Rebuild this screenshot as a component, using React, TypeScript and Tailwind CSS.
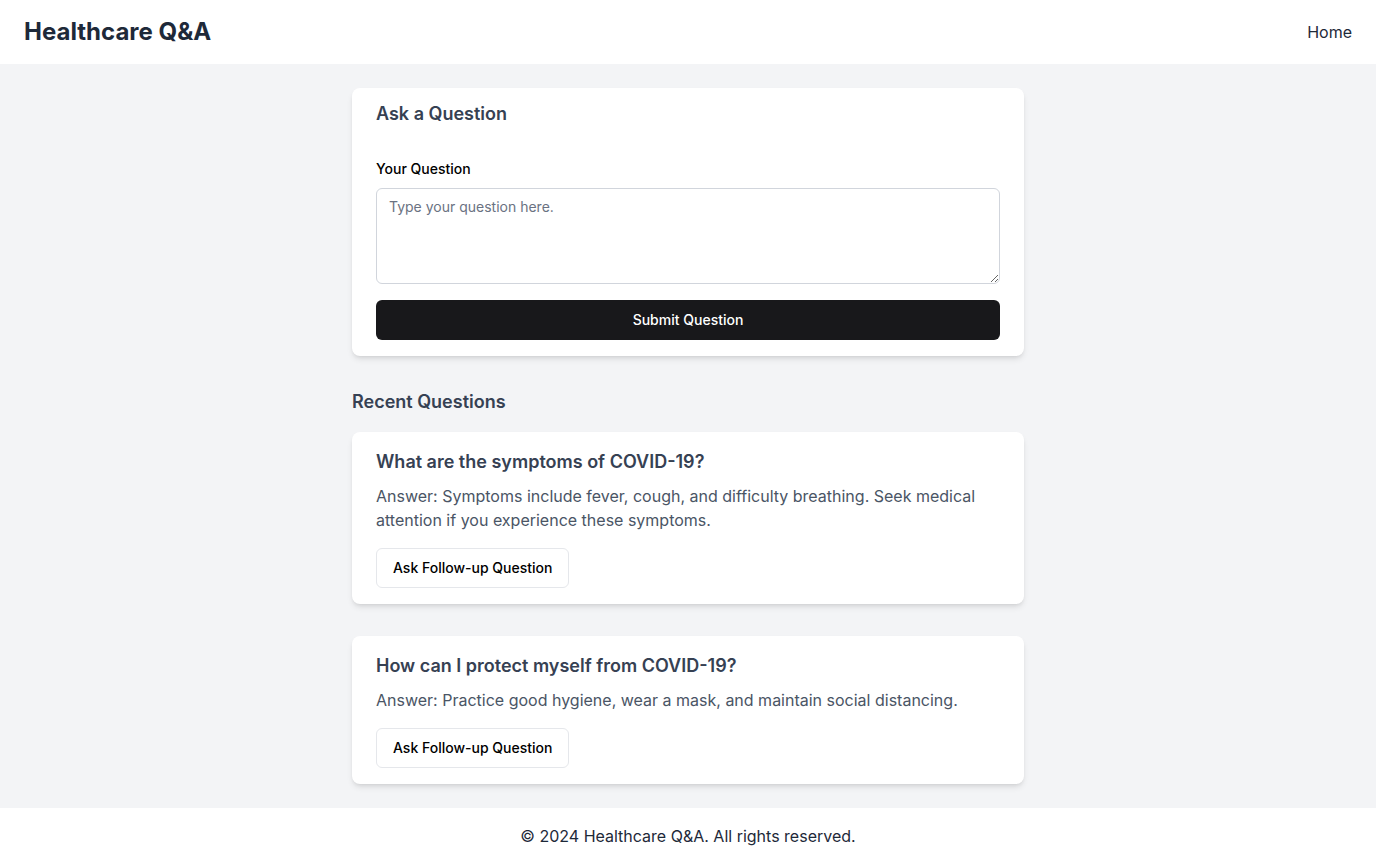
import React from "react";

const questions = [
  {
    question: "What are the symptoms of COVID-19?",
    answer:
      "Answer: Symptoms include fever, cough, and difficulty breathing. Seek medical attention if you experience these symptoms.",
  },
  {
    question: "How can I protect myself from COVID-19?",
    answer:
      "Answer: Practice good hygiene, wear a mask, and maintain social distancing.",
  },
];

const App = () => {
  return (
    <div
      className="min-h-screen flex flex-col bg-gray-100"
      style={{ fontFamily: "Inter, 'Noto Sans', sans-serif" }}
    >
      {/* Header */}
      <header className="h-16 bg-white flex items-center justify-between px-6">
        <h1 className="text-2xl font-bold text-gray-800">Healthcare Q&amp;A</h1>
        <nav>
          <a href="#" className="text-base text-gray-800">
            Home
          </a>
        </nav>
      </header>

      <main className="flex-1 px-6 pt-6 pb-6">
        <div className="max-w-2xl mx-auto">
          {/* Ask form */}
          <div className="bg-white rounded-lg shadow-md px-6 pt-[17px] pb-4">
            <h2 className="text-lg leading-none font-semibold text-gray-700 mb-9">
              Ask a Question
            </h2>
            <label className="block text-sm font-medium text-black mb-[9px]">
              Your Question
            </label>
            <textarea
              className="block w-full h-24 border border-gray-300 rounded-md px-3 py-2 text-sm placeholder:text-gray-500"
              placeholder="Type your question here."
            />
            <button className="mt-4 w-full h-10 rounded-md bg-[#18181b] text-white text-sm font-medium">
              Submit Question
            </button>
          </div>

          {/* Recent */}
          <h2 className="mt-8 mb-4 text-lg font-semibold text-gray-700">
            Recent Questions
          </h2>
          <div className="flex flex-col gap-8">
            {questions.map((q, i) => (
              <div key={i} className="bg-white rounded-lg shadow-md px-6 pt-4 pb-4">
                <h3 className="text-lg font-semibold text-gray-700 mb-2">{q.question}</h3>
                <p className="text-base text-gray-600">{q.answer}</p>
                <button className="mt-4 h-10 px-4 rounded-md border border-gray-200 bg-white text-sm font-medium text-black">
                  Ask Follow-up Question
                </button>
              </div>
            ))}
          </div>
        </div>
      </main>

      {/* Footer */}
      <footer className="bg-white py-4 text-center text-base text-gray-800">
        © 2024 Healthcare Q&amp;A. All rights reserved.
      </footer>
    </div>
  );
};

export default App;
